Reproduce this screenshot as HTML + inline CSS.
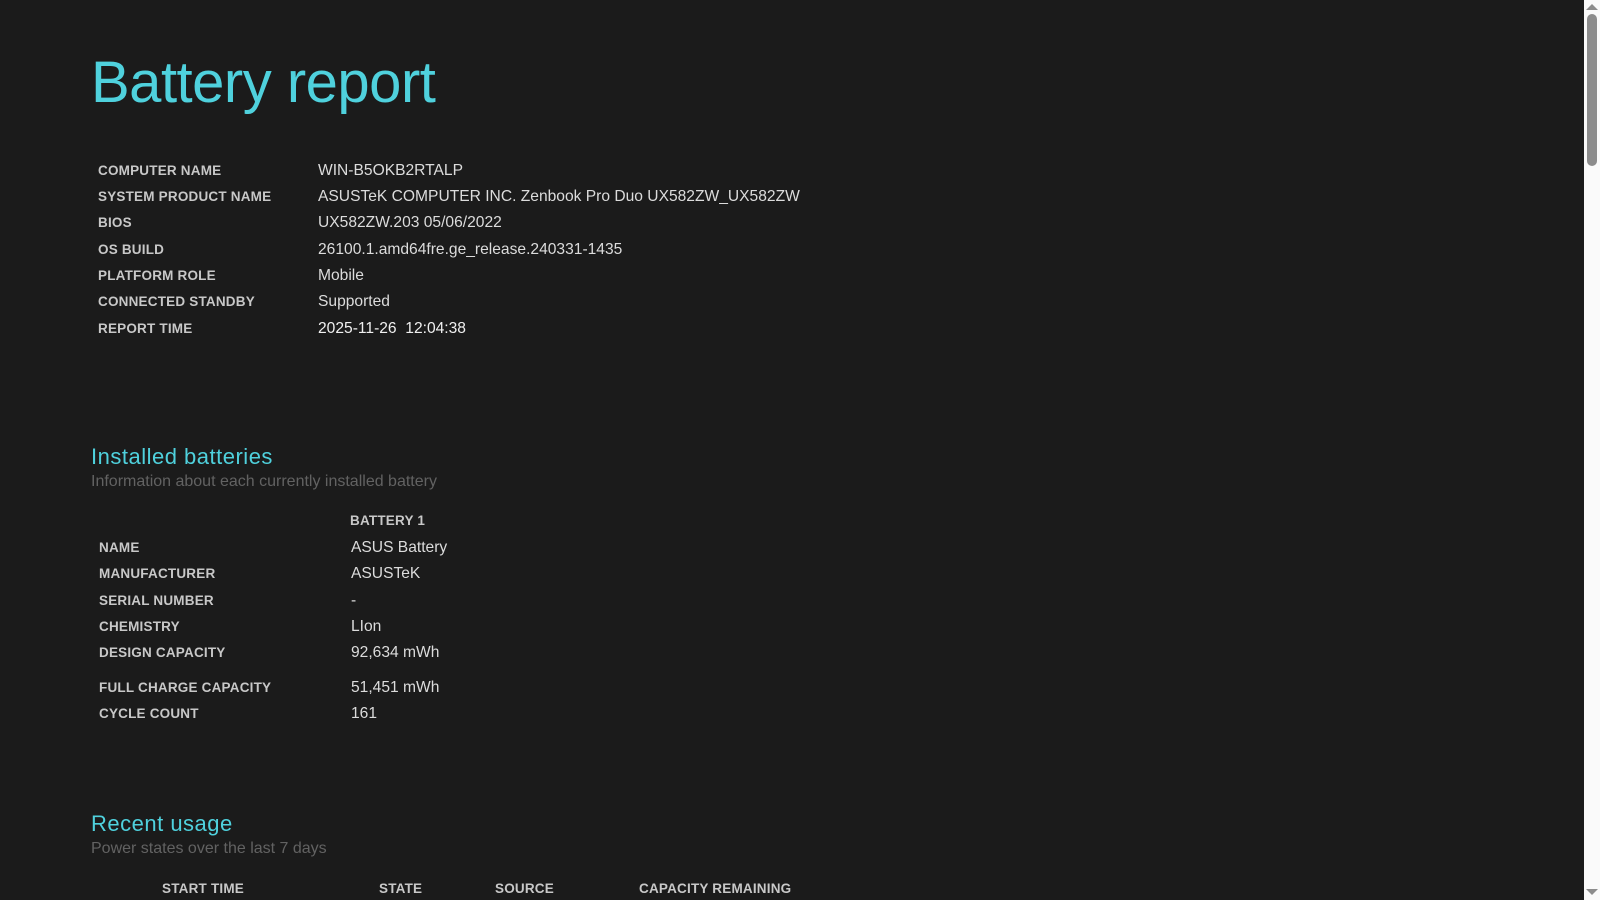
<!DOCTYPE html>
<html><head><meta charset="utf-8"><style>
html,body{margin:0;padding:0;width:1600px;height:900px;overflow:hidden;background:#1b1b1b;font-family:"Liberation Sans",sans-serif}
.a{position:absolute;white-space:nowrap;line-height:1}
.t{font-size:58px;color:#4fd1dd;left:91px;top:54px;letter-spacing:-0.5px}
.l{font-size:13.5px;font-weight:bold;color:#c8c8c8;letter-spacing:0.2px}
.v{font-size:15.6px;color:#dcdcdc}
.h{font-size:22px;color:#4fd1dd;left:91px;letter-spacing:0.5px}
.s{font-size:16px;color:#626262;left:91px}
#sb{position:absolute;left:1584px;top:0;width:16px;height:900px;background:#fafafa}
#th{position:absolute;left:1587px;top:14px;width:10px;height:152px;background:#8c8c8c;border-radius:5px}
</style></head><body>
<div class="a t">Battery report</div>

<div class="a l" style="left:98px;top:164px">COMPUTER NAME</div><div class="a v" style="left:318px;top:163px">WIN-B5OKB2RTALP</div>
<div class="a l" style="left:98px;top:190px">SYSTEM PRODUCT NAME</div><div class="a v" style="left:318px;top:189px">ASUSTeK COMPUTER INC. Zenbook Pro Duo UX582ZW_UX582ZW</div>
<div class="a l" style="left:98px;top:216px">BIOS</div><div class="a v" style="left:318px;top:215px">UX582ZW.203 05/06/2022</div>
<div class="a l" style="left:98px;top:243px">OS BUILD</div><div class="a v" style="left:318px;top:242px">26100.1.amd64fre.ge_release.240331-1435</div>
<div class="a l" style="left:98px;top:269px">PLATFORM ROLE</div><div class="a v" style="left:318px;top:268px">Mobile</div>
<div class="a l" style="left:98px;top:295px">CONNECTED STANDBY</div><div class="a v" style="left:318px;top:294px">Supported</div>
<div class="a l" style="left:98px;top:322px">REPORT TIME</div><div class="a v" style="left:318px;top:321px;color:#f0f0f0">2025-11-26&nbsp; 12:04:38</div>

<div class="a h" style="top:446px">Installed batteries</div>
<div class="a s" style="top:474px">Information about each currently installed battery</div>
<div class="a l" style="left:350px;top:514px">BATTERY 1</div>
<div class="a l" style="left:99px;top:541px">NAME</div><div class="a v" style="left:351px;top:540px">ASUS Battery</div>
<div class="a l" style="left:99px;top:567px">MANUFACTURER</div><div class="a v" style="left:351px;top:566px">ASUSTeK</div>
<div class="a l" style="left:99px;top:594px">SERIAL NUMBER</div><div class="a v" style="left:351px;top:593px">-</div>
<div class="a l" style="left:99px;top:620px">CHEMISTRY</div><div class="a v" style="left:351px;top:619px">LIon</div>
<div class="a l" style="left:99px;top:646px">DESIGN CAPACITY</div><div class="a v" style="left:351px;top:645px">92,634 mWh</div>
<div class="a l" style="left:99px;top:681px">FULL CHARGE CAPACITY</div><div class="a v" style="left:351px;top:680px">51,451 mWh</div>
<div class="a l" style="left:99px;top:707px">CYCLE COUNT</div><div class="a v" style="left:351px;top:706px">161</div>

<div class="a h" style="top:813px">Recent usage</div>
<div class="a s" style="top:841px">Power states over the last 7 days</div>
<div class="a l" style="left:162px;top:882px">START TIME</div>
<div class="a l" style="left:379px;top:882px">STATE</div>
<div class="a l" style="left:495px;top:882px">SOURCE</div>
<div class="a l" style="left:639px;top:882px">CAPACITY REMAINING</div>

<div id="sb"></div><div id="th"></div>
<svg style="position:absolute;left:1586px;top:4px" width="12" height="6"><path d="M0 6L6 0L12 6Z" fill="#8c8c8c"/></svg>
<svg style="position:absolute;left:1586px;top:889px" width="12" height="6"><path d="M0 0L6 6L12 0Z" fill="#8c8c8c"/></svg>
</body></html>
